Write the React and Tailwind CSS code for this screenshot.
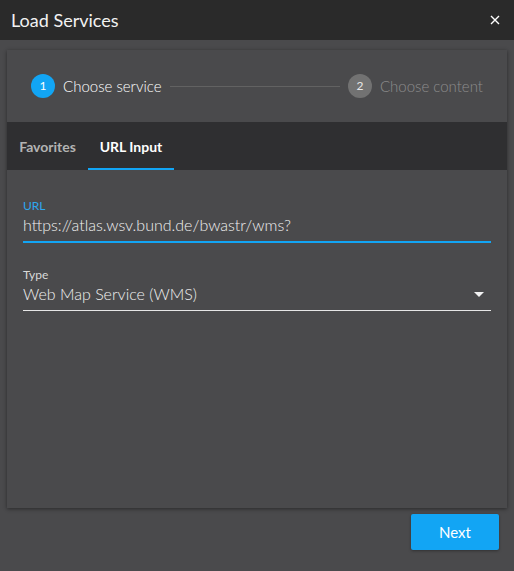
export default function App() {
  return (
    <div className="h-[571px] w-[514px] flex flex-col bg-[#4a4a4c] text-white overflow-hidden" style={{ fontFamily: "Lato, 'Noto Sans', sans-serif" }}>
      <div className="h-10 shrink-0 bg-[#2a2a2a] flex items-center justify-between pl-[11px] pr-[14px]">
        <span className="text-[18px] leading-none text-[#f2f2f2]">Load Services</span>
        <svg width="10" height="10" viewBox="0 0 10 10" className="text-white">
          <path d="M1 1L9 9M9 1L1 9" stroke="currentColor" strokeWidth="1.4" />
        </svg>
      </div>
      <div className="flex-1 flex flex-col px-[7px] pt-[10px]">
        <div className="flex-1 flex flex-col bg-[#4a4a4c] shadow-[0_1px_4px_rgba(0,0,0,0.45)]">
          <div className="h-[72px] shrink-0 flex items-center px-6">
            <div className="w-6 h-6 rounded-full bg-[#12a5f4] flex items-center justify-center text-[12px] text-white">1</div>
            <span className="ml-2 text-[15px] font-light text-white">Choose service</span>
            <div className="flex-1 mx-2 h-px bg-[#626262]"></div>
            <div className="w-6 h-6 rounded-full bg-[#727272] flex items-center justify-center text-[12px] text-[#e8e8e8]">2</div>
            <span className="ml-2 text-[15px] font-light text-[#8d8d8d]">Choose content</span>
          </div>
          <div className="h-12 shrink-0 bg-[#2f2f31] flex">
            <div className="w-[81px] flex items-center justify-center text-[14px] font-bold text-[#b3b3b3]">Favorites</div>
            <div className="w-[86px] relative flex items-center justify-center text-[14px] font-bold text-white">
              URL Input
              <div className="absolute left-0 right-0 bottom-0 h-[2px] bg-[#12a5f4]"></div>
            </div>
          </div>
          <div className="px-4 pt-[29px] flex flex-col">
            <div className="text-[12px] leading-[14px] text-[#2ea7ef]">URL</div>
            <div className="text-[16px] leading-6 font-light text-[#f0f0f0] pb-[4px] border-b-2 border-[#12a5f4]">https://atlas.wsv.bund.de/bwastr/wms?</div>
            <div className="mt-[25px] text-[12px] leading-[14px] text-[#d9d9d9]">Type</div>
            <div className="flex items-center justify-between text-[16px] leading-6 font-light text-[#f0f0f0] pb-1 border-b border-[#e6e6e6]">
              <span>Web Map Service (WMS)</span>
              <svg width="10" height="5" viewBox="0 0 10 5" className="mr-[7px]">
                <path d="M0 0L10 0L5 5Z" fill="#f2f2f2" />
              </svg>
            </div>
          </div>
        </div>
        <div className="flex justify-end pt-[6px] pb-[21px] pr-2">
          <button className="w-[88px] h-9 rounded-[2px] bg-[#12a5f4] text-[15px] text-white shadow-[0_1px_3px_rgba(0,0,0,0.35)]">Next</button>
        </div>
      </div>
    </div>
  );
}
